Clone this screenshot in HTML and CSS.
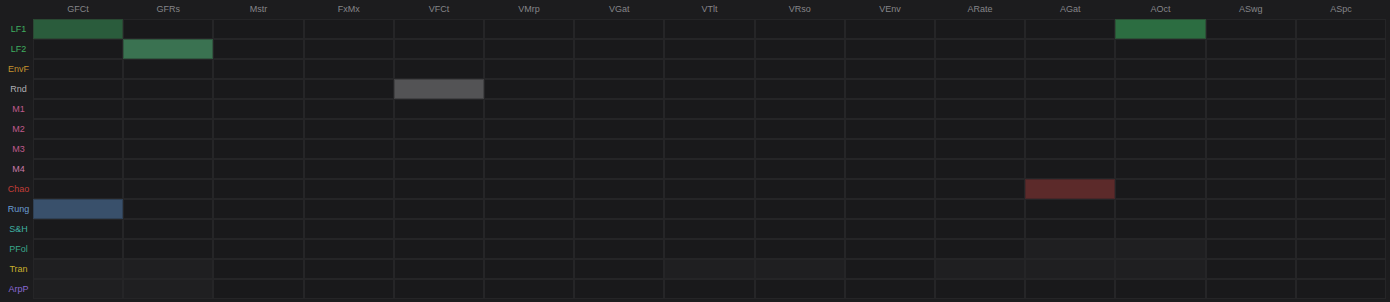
FILE: index.html
```html
<!DOCTYPE html>
<html lang="en">
<head>
  <meta charset="UTF-8">
  <title>Mod Matrix</title>
  <link rel="stylesheet" href="styles.css">
</head>
<body>

  <div class="matrix" id="matrix"></div>

  <script>
    const targets = ["GFCt", "GFRs", "Mstr", "FxMx", "VFCt", "VMrp", "VGat", "VTlt",
                     "VRso", "VEnv", "ARate", "AGat", "AOct", "ASwg", "ASpc"];

    const sources = [
      { name: "LF1", cls: "lfo" },
      { name: "LF2", cls: "lfo" },
      { name: "EnvF", cls: "env" },
      { name: "Rnd", cls: "rnd" },
      { name: "M1", cls: "macro" },
      { name: "M2", cls: "macro" },
      { name: "M3", cls: "macro" },
      { name: "M4", cls: "macro4" },
      { name: "Chao", cls: "chaos" },
      { name: "Rung", cls: "rung" },
      { name: "S&H", cls: "snh" },
      { name: "PFol", cls: "pfol" },
      { name: "Tran", cls: "tran" },
      { name: "ArpP", cls: "arp" }
    ];

    // source -> { target index: style }
    const routes = {
      "LF1": { 0: "on-green", 12: "on-green2" },
      "LF2": { 1: "on-green3" },
      "Rnd": { 4: "on-gray" },
      "Chao": { 11: "on-red" },
      "Rung": { 0: "on-blue" }
    };

    const dim = {
      "PFol": [11, 12],
      "Tran": [0, 1, 7, 8, 10, 11, 12],
      "ArpP": [0, 1]
    };

    const matrix = document.getElementById("matrix");
    matrix.appendChild(document.createElement("div"));

    targets.forEach(t => {
      const h = document.createElement("div");
      h.className = "head";
      h.textContent = t;
      matrix.appendChild(h);
    });

    sources.forEach(src => {
      const label = document.createElement("div");
      label.className = "label " + src.cls;
      label.textContent = src.name;
      matrix.appendChild(label);

      targets.forEach((t, i) => {
        const cell = document.createElement("div");
        cell.className = "cell";
        if (routes[src.name] && routes[src.name][i]) {
          cell.classList.add(routes[src.name][i]);
        } else if (dim[src.name] && dim[src.name].includes(i)) {
          cell.classList.add("lit");
        }
        matrix.appendChild(cell);
      });
    });
  </script>

</body>
</html>
```

FILE: styles.css
```css
body {
  margin: 0;
  padding: 0;
  background: #1c1c1e;
  font-family: "Liberation Sans", Arial, sans-serif;
  width: 1390px;
  height: 302px;
  overflow: hidden;
}

.matrix {
  display: grid;
  grid-template-columns: 29px repeat(15, 1fr);
  grid-template-rows: 19px repeat(14, 20px);
  padding: 0 4px 0 4px;
}

.head {
  font-size: 9px;
  color: #858589;
  text-align: center;
  line-height: 19px;
}

.label {
  font-size: 9px;
  text-align: center;
  line-height: 20px;
}

.cell {
  background: #19191b;
  border: 1px solid #252527;
}

.cell.lit {
  background: #1f1f21;
}

.on-green {
  background: #2a5c3c;
  border-color: #2a4933;
}

.on-green2 {
  background: #2c6d41;
  border-color: #2b5236;
}

.on-green3 {
  background: #3a7251;
  border-color: #30573f;
}

.on-gray {
  background: #535355;
  border-color: #414143;
}

.on-red {
  background: #5c2a2a;
  border-color: #482628;
}

.on-blue {
  background: #39506b;
  border-color: #2f4054;
}

.lfo { color: #3fae5f; }
.env { color: #c4922e; }
.rnd { color: #aeaeb2; }
.macro { color: #c05a8c; }
.macro4 { color: #c87aa6; }
.chaos { color: #c23c38; }
.rung { color: #6a9bd2; }
.snh { color: #3fb0a2; }
.pfol { color: #39a88c; }
.tran { color: #c8b02c; }
.arp { color: #8a68d4; }
```
